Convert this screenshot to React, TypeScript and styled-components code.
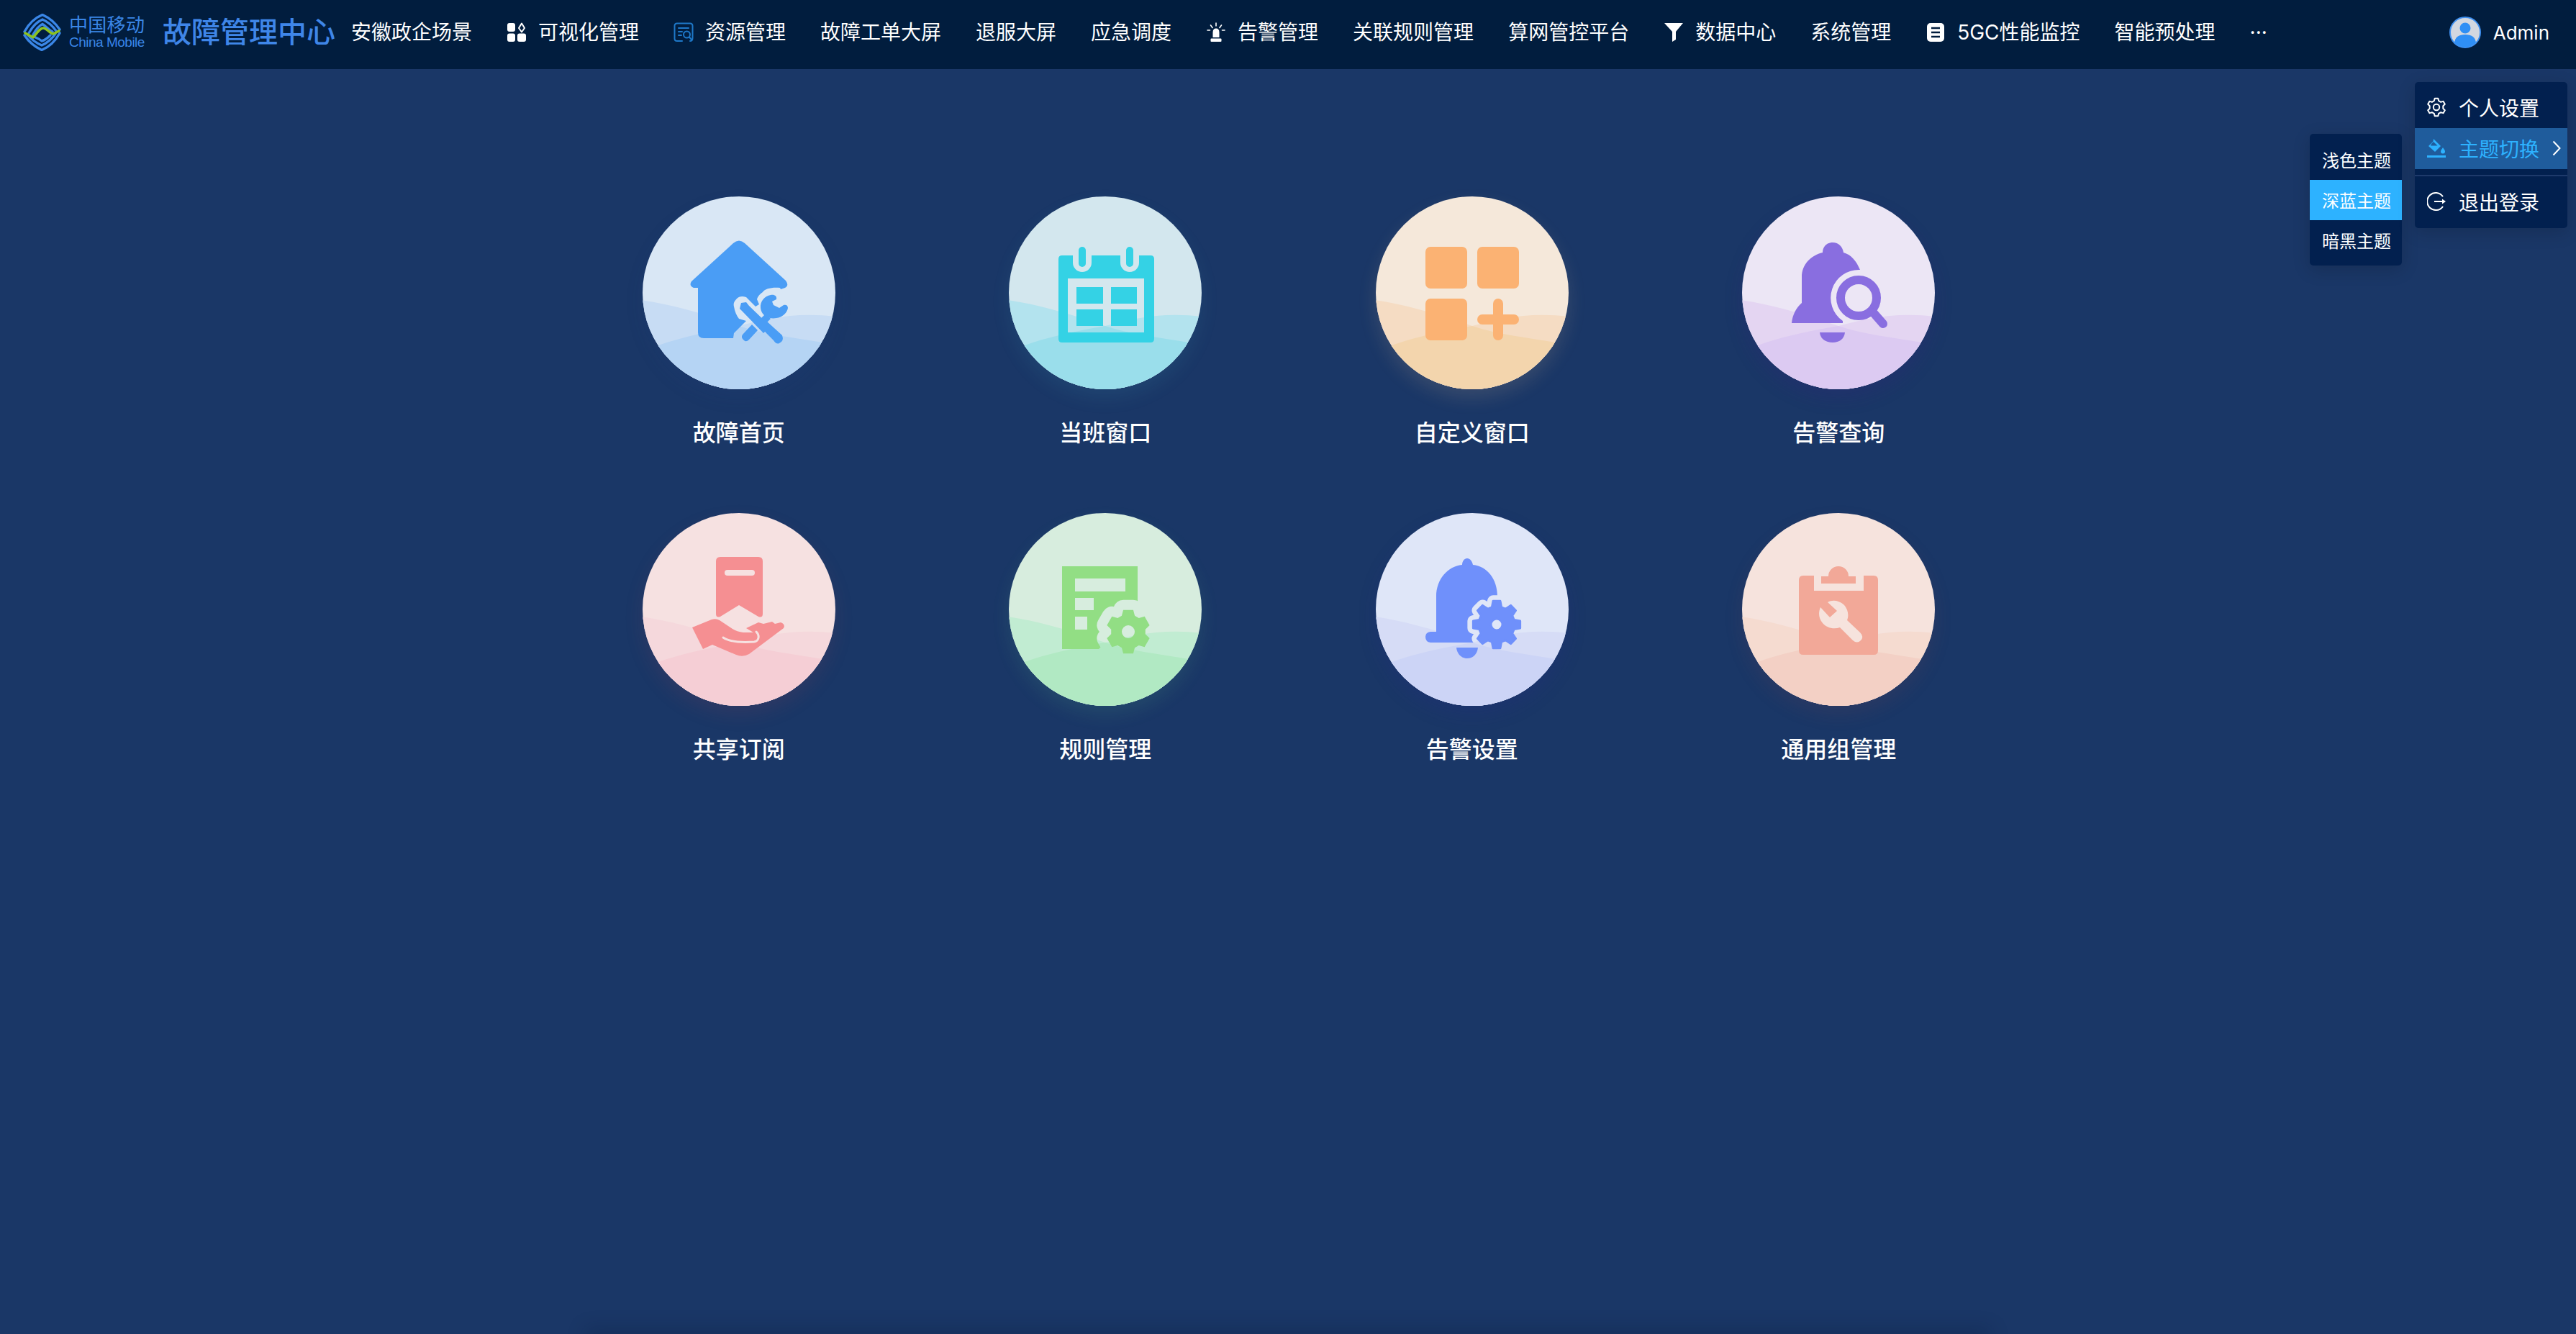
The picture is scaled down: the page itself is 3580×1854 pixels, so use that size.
import React from 'react';
import styled, { createGlobalStyle } from 'styled-components';

const FONT = `Inter, "Noto Sans CJK SC", "Noto Sans", sans-serif`;

const Global = createGlobalStyle`
  html, body { margin: 0; padding: 0; background: #1a3767; }
  body { font-family: ${FONT}; }
  * { box-sizing: border-box; }
`;

const Page = styled.div`
  position: relative;
  width: 3580px;
  height: 1854px;
  overflow: hidden;
  background: #1a3767;
`;

const Header = styled.header`
  display: flex;
  align-items: center;
  height: 96px;
  padding: 0 0 6px 32px;
  background: #011d3e;
  color: #fff;
`;

const LogoBlock = styled.div`
  display: flex;
  align-items: center;
  gap: 11px;
  width: 194px;
  flex: none;
`;

const LogoText = styled.div`
  display: flex;
  flex-direction: column;
  color: #3a86e6;
`;

const LogoCn = styled.span`
  font-size: 26px;
  line-height: 27px;
  letter-spacing: 0.3px;
  white-space: nowrap;
`;

const LogoEn = styled.span`
  font-family: "Liberation Sans", sans-serif;
  font-size: 19px;
  line-height: 22px;
  letter-spacing: -0.5px;
  white-space: nowrap;
`;

const Title = styled.h1`
  margin: 0;
  flex: none;
  width: 238px;
  font-size: 40px;
  line-height: 50px;
  font-weight: 500;
  color: #3f86e8;
  white-space: nowrap;
`;

const Nav = styled.nav`
  display: flex;
  align-items: center;
  flex: 1;
  color: #fff;
`;

const NavItem = styled.div`
  display: flex;
  align-items: center;
  gap: 16px;
  padding: 0 24px;
  font-size: 28px;
  line-height: 40px;
  white-space: nowrap;
`;

const NavIcon = styled.svg`
  width: 28px;
  height: 28px;
  flex: none;
`;

const User = styled.div`
  display: flex;
  align-items: center;
  gap: 17px;
  padding-right: 37px;
  font-size: 26px;
  flex: none;
`;

const Avatar = styled.svg`
  width: 44px;
  height: 44px;
  flex: none;
`;

const Grid = styled.main`
  display: grid;
  grid-template-columns: repeat(4, 509.5px);
  row-gap: 88px;
  justify-items: center;
  padding: 177px 0 0 772px;
`;

const Tile = styled.div`
  display: flex;
  flex-direction: column;
  align-items: center;
  gap: 38px;
`;

const Circle = styled.div<{ $glow: string; $icon: string }>`
  width: 268px;
  height: 268px;
  border-radius: 50%;
  overflow: hidden;
  color: ${p => p.$icon};
  box-shadow: 0 12px 26px ${p => p.$glow};
  svg { display: block; width: 268px; height: 268px; }
`;

const Label = styled.div`
  font-size: 32px;
  line-height: 46px;
  font-weight: 500;
  color: #fff;
  white-space: nowrap;
`;

const Menu = styled.div`
  position: absolute;
  background: #02204f;
  border-radius: 5px;
  box-shadow: 0 6px 24px rgba(0, 0, 0, 0.16);
  color: #fff;
`;

const UserMenu = styled(Menu)`
  top: 114px;
  left: 3356px;
  width: 212px;
  padding-top: 8px;
  height: 203px;
`;

const ThemeMenu = styled(Menu)`
  top: 186px;
  left: 3210px;
  width: 128px;
  height: 183px;
  padding-top: 8px;
`;

const MenuRow = styled.div<{ $active?: boolean }>`
  display: flex;
  align-items: center;
  gap: 18px;
  height: ${p => (p.$active ? 57 : 56)}px;
  padding: 0 0 2px 17px;
  font-size: 28px;
  white-space: nowrap;
  background: ${p => (p.$active ? '#1f5c9c' : 'transparent')};
  color: ${p => (p.$active ? '#2db2ff' : '#fff')};
  svg { flex: none; }
`;

const MenuIcon = styled.svg`
  width: 26px;
  height: 28px;
`;

const Arrow = styled.svg`
  width: 12px;
  height: 22px;
`;

const Divider = styled.div`
  height: 2px;
  margin: 8px 0;
  background: #1e3a6b;
`;

const ThemeRow = styled.div<{ $active?: boolean }>`
  display: flex;
  align-items: center;
  height: 56px;
  padding: 0 0 2px 17px;
  font-size: 24px;
  white-space: nowrap;
  color: #fff;
  background: ${p => (p.$active ? '#2db2ff' : 'transparent')};
`;

const BottomShade = styled.div`
  position: absolute;
  left: 820px;
  bottom: -6px;
  width: 1940px;
  height: 6px;
  box-shadow: 0 0 26px 6px rgba(2, 20, 50, 0.28);
`;

function gear(cx: number, cy: number, ro: number, ri: number, n: number, hole = 0, w = 0.27) {
  const step = (Math.PI * 2) / n;
  const pts: string[] = [];
  const pt = (r: number, a: number) => `${(cx + r * Math.cos(a)).toFixed(2)} ${(cy + r * Math.sin(a)).toFixed(2)}`;
  for (let i = 0; i < n; i++) {
    const a = i * step - Math.PI / 2;
    pts.push(pt(ri, a - step * (w + 0.1)), pt(ro, a - step * w * 0.8), pt(ro, a + step * w * 0.8), pt(ri, a + step * (w + 0.1)));
  }
  let d = `M${pts.join(' L')} Z`;
  if (hole) d += ` M${cx - hole} ${cy} a${hole} ${hole} 0 1 0 ${hole * 2} 0 a${hole} ${hole} 0 1 0 ${-hole * 2} 0 Z`;
  return d;
}

const HouseIcon = () => (
  <g fill="currentColor">
    <path d="M85 197 Q77 197 77 189 L77 127 L71 127 Q64 124 68 118 L126 65 Q134 58 142 65 L199 117 Q204 124 198 127 L192 129 L191 127 C180 126 170 128 167 133 C162 136 160 140 159 143 L162 150 L157 153 L144 140 C138 138 134 139 131 142 C127 146 126 149 127 153 C128 160 131 166 134 170 L144 173 L127 190 L126 197 Z" />
    <path d="M141 200 Q136 196 139 192 L152 178 L160 186 L148 199 Q144 203 141 200 Z" />
    <path d="M137 148 L144 147 L148 152 L178 181 L168 190 L139 160 L135 156 Z" />
    <path d="M164 191 L172 182 L194 202 Q197 210 190 213 Q186 215 182 209 Z" transform="translate(0 -9)" />
    <path d="M178 137 C170 138 163 146 164 155 C165 166 176 171 186 169 C194 168 201 162 202 155 C202 151 199 150 196 151 L190 155 L182 151 L180 146 L186 143 C187 138 183 136 178 137 Z" />
    <path d="M171 163 L178 170 L166 182 L159 175 Z" />
  </g>
);

const CalendarIcon = () => (
  <g fill="currentColor">
    <path
      fillRule="evenodd"
      d="M74 82 H89 V92 A13 13 0 0 0 115 92 V82 H155 V92 A13 13 0 0 0 181 92 V82 H197 Q202 82 202 87 V198 Q202 203 197 203 H74 Q69 203 69 198 V87 Q69 82 74 82 Z M82 114 V189 H188 V114 Z"
    />
    <rect x="97" y="70" width="10" height="28" rx="5" />
    <rect x="163" y="70" width="10" height="28" rx="5" />
    <rect x="94" y="126" width="37" height="23" />
    <rect x="142" y="126" width="36" height="23" />
    <rect x="94" y="157" width="37" height="23" />
    <rect x="142" y="157" width="36" height="23" />
  </g>
);

const AppsIcon = () => (
  <g fill="currentColor">
    <rect x="69" y="70" width="58" height="58" rx="7" />
    <rect x="141" y="70" width="58" height="58" rx="7" />
    <rect x="69" y="142" width="58" height="58" rx="7" />
    <rect x="141" y="164" width="58" height="14" rx="7" />
    <rect x="163" y="142" width="14" height="58" rx="7" />
  </g>
);

const BellSearchIcon = () => (
  <g fill="currentColor">
    <path d="M69 176 C70 165 75 155 83 148 L83 112 C83 94 96 82 112 78 C112 70 118 64 126 64 C134 64 140 70 141 78 C152 81 159 90 164 102 A39 39 0 0 0 140 173 L140 176 Z" />
    <path d="M108 189 H143 C142 198 135 203 126 203 C116 203 109 198 108 189 Z" />
    <circle cx="162" cy="141" r="25" fill="none" stroke="currentColor" strokeWidth="12" />
    <path d="M182 161 L196 177" fill="none" stroke="currentColor" strokeWidth="12" strokeLinecap="round" />
  </g>
);

const SubscribeIcon = ({ light }: { light: string }) => (
  <g fill="currentColor">
    <path d="M108 61 H161 Q167 61 167 67 V140 Q167 146 161 144 L134 128 L108 144 Q102 146 102 140 V67 Q102 61 108 61 Z" />
    <rect x="114" y="79" width="42" height="8" rx="4" fill={light} />
    <path d="M69 159 L96 148 Q102 146 107 149 L125 161 Q131 165 140 166 L154 166 L144 160 L161 152 L168 154 L180 151 L184 154 L192 152 Q199 155 196 160 L148 196 Q139 201 130 197 L97 183 L84 189 Z" />
    <path d="M112 173 C122 180 140 180 155 179 C162 178 163 170 158 165" fill="none" stroke={light} strokeWidth="3" strokeLinecap="round" />
  </g>
);

const RuleIcon = () => {
  const g = gear(166, 165, 31, 24, 6, 9);
  return (
    <g fill="currentColor">
      <mask id="ruleHalo" maskUnits="userSpaceOnUse" x="0" y="0" width="268" height="268">
        <rect width="268" height="268" fill="#fff" />
        <path d={gear(166, 165, 31, 24, 6)} fill="#000" stroke="#000" strokeWidth="28" strokeLinejoin="round" />
      </mask>
      <path
        mask="url(#ruleHalo)"
        fillRule="evenodd"
        d="M74 74 H179 V138 L125 189 H74 Z M92 91 V109 H162 V91 Z M92 118 V135 H118 V118 Z M92 144 V162 H109 V144 Z"
      />
      <path d={g} fillRule="evenodd" />
    </g>
  );
};

const BellGearIcon = () => {
  const g = gear(168, 155, 33, 25, 8, 8, 0.24);
  return (
    <g fill="currentColor">
      <mask id="bellHalo" maskUnits="userSpaceOnUse" x="0" y="0" width="268" height="268">
        <rect width="268" height="268" fill="#fff" />
        <path d={gear(168, 155, 33, 25, 8, 0, 0.24)} fill="#000" stroke="#000" strokeWidth="16" strokeLinejoin="round" />
      </mask>
      <path
        mask="url(#bellHalo)"
        d="M76 165 H84 V116 C84 92 100 74 120 72 C120 67 123 63 127 63 C131 63 134 67 135 72 C155 74 169 92 169 116 V180 H76 Q69 179 69 172 Q69 166 76 165 Z"
      />
      <path d="M112 187 H142 C141 196 135 202 127 202 C119 202 113 196 112 187 Z" />
      <path d={g} fillRule="evenodd" stroke="currentColor" strokeWidth="3" strokeLinejoin="round" />
    </g>
  );
};

const ClipboardIcon = ({ light }: { light: string }) => (
  <g fill="currentColor">
    <path d="M85 87 H100 V108 H169 V87 H183 Q189 87 189 93 V191 Q189 197 183 197 H85 Q79 197 79 191 V93 Q79 87 85 87 Z" />
    <path d="M110 88 H120 A14 14 0 0 1 148 88 H158 V98 H110 Z" />
    <path
      fill={light}
      d="M119 124 C126 120 135 122 141 127 C147 133 149 142 146 149 L164 166 Q170 172 165 177 Q160 182 154 177 L136 159 C128 162 118 160 112 153 C106 146 106 138 109 131 L122 145 L132 136 Z"
    />
  </g>
);

type TileData = { label: string; top: string; mid: string; low: string; icon: string; glow: string; art: React.ReactNode };

const tiles: TileData[] = [
  { label: '故障首页', top: '#d9e7f5', mid: '#c7dcf4', low: '#b5d4f4', icon: '#4a9df5', glow: 'rgba(40,70,140,0.1)', art: <HouseIcon /> },
  { label: '当班窗口', top: '#d3e7ee', mid: '#b3e3ee', low: '#9adeeb', icon: '#34d2e5', glow: 'rgba(80,190,210,0.1)', art: <CalendarIcon /> },
  { label: '自定义窗口', top: '#f5e8da', mid: '#f5dcc3', low: '#f3d5ad', icon: '#fbb273', glow: 'rgba(240,200,150,0.14)', art: <AppsIcon /> },
  { label: '告警查询', top: '#ece6f5', mid: '#e4d5f2', low: '#dccaf2', icon: '#896ee0', glow: 'rgba(60,30,130,0.2)', art: <BellSearchIcon /> },
  { label: '共享订阅', top: '#f6e1e1', mid: '#f5d8dc', low: '#f5ced5', icon: '#f58f92', glow: 'rgba(150,70,90,0.16)', art: <SubscribeIcon light="#f6e1e1" /> },
  { label: '规则管理', top: '#d7edde', mid: '#c1ecd2', low: '#b1e9c3', icon: '#92de84', glow: 'rgba(110,220,150,0.11)', art: <RuleIcon /> },
  { label: '告警设置', top: '#dfe6f8', mid: '#d6dcf6', low: '#ccd4f6', icon: '#6f90fb', glow: 'rgba(40,40,140,0.2)', art: <BellGearIcon /> },
  { label: '通用组管理', top: '#f6e3dd', mid: '#f5dbd0', low: '#f3d0c5', icon: '#f2a898', glow: 'rgba(140,70,80,0.14)', art: <ClipboardIcon light="#f6e3dd" /> },
];

const Waves = ({ top, mid, low }: { top: string; mid: string; low: string }) => (
  <>
    <rect width="268" height="268" fill={top} />
    <path d="M-2 144 C40 150 85 163 134 180 C170 192 210 196 250 203 L268 268 L0 268 Z" fill={mid} />
    <path d="M18 209 C55 195 95 187 134 180 C170 170 215 160 268 167 L268 268 L0 268 Z" fill={mid} />
    <path d="M22 207 C55 195 95 187 134 180 C170 192 210 196 250 203 L268 268 L0 268 Z" fill={low} />
  </>
);

const VisualIcon = () => (
  <NavIcon viewBox="0 0 28 28">
    <rect x="1" y="1" width="11" height="12" rx="3" fill="#fff" />
    <path d="M21 1.5 L25 8 L21 13.5 L17 8 Z" fill="none" stroke="#fff" strokeWidth="2" strokeLinejoin="round" />
    <rect x="1" y="15.5" width="11" height="11.5" rx="3" fill="#fff" />
    <rect x="15" y="15.5" width="12" height="11.5" rx="3" fill="#fff" />
  </NavIcon>
);

const ResourceIcon = () => (
  <NavIcon viewBox="0 0 28 28">
    <g fill="none" stroke="#1e78c8" strokeWidth="2" strokeLinecap="round">
      <path d="M12 26 H5 Q1.5 26 1.5 22.5 V5 Q1.5 1.5 5 1.5 H23 Q26.5 1.5 26.5 5 V22 Q26.5 26 23 26" />
      <path d="M7 8 H21 M7 13 H12 M7 18 H11" />
      <circle cx="18.5" cy="17" r="4.5" />
      <path d="M22 20.5 L25 24" />
    </g>
  </NavIcon>
);

const BeaconIcon = () => (
  <NavIcon viewBox="0 0 28 28">
    <g stroke="#fff" strokeWidth="1.6" strokeLinecap="round">
      <path d="M14 1 V5 M6.5 4 L9 7.5 M21.5 4 L19 7.5 M2 11 H5.5 M22.5 11 H26" />
    </g>
    <path d="M9.5 21 V14 Q9.5 8.5 14 8.5 Q18.5 8.5 18.5 14 V21 Z" fill="#fff" />
    <rect x="6.5" y="22.5" width="15" height="4.5" rx="1" fill="#fff" />
  </NavIcon>
);

const FunnelIcon = () => (
  <NavIcon viewBox="0 0 28 28">
    <path d="M1 1 H27 L17 13 V24 L12 27 V13 Z" fill="#fff" strokeLinejoin="round" />
  </NavIcon>
);

const DbIcon = () => (
  <NavIcon viewBox="0 0 28 28">
    <rect x="2" y="1" width="24" height="26" rx="5" fill="#fff" />
    <path d="M8 8 H20 M8 14 H20 M8 20 H20" stroke="#011d3e" strokeWidth="2.4" />
  </NavIcon>
);

const ChinaMobileLogo = () => (
  <svg width="53" height="52" viewBox="0 0 53 52" fill="none">
    <g stroke="#3a86e6" strokeWidth="3.4" strokeLinecap="round">
      <path d="M2 25 C8 14 16 6 27 1.5 C37 6 45 13 51 22" />
      <path d="M8 27 C13 18 20 11 27 8 C34 11 41 17 46 24" />
      <path d="M14 29 C18 22 22 17 27 14.5 C33 18 36 23 41 25" />
      <path d="M51 27 C45 38 37 46 26 50.5 C16 46 8 39 2 30" />
      <path d="M45 28 C40 35 33 41 26 44 C19 41 12 36 7 30" />
      <path d="M38 30 C35 33 30 37 26 38 C21 34 17 33 13 31" />
    </g>
    <path d="M3 27 L14 33 C20 26 24 20 28 20 C33 20 38 28 42 28 L50 24" stroke="#8cc220" strokeWidth="3.6" strokeLinecap="round" strokeLinejoin="round" />
  </svg>
);

const navItems: { text: string; icon?: React.ReactNode }[] = [
  { text: '安徽政企场景' },
  { text: '可视化管理', icon: <VisualIcon /> },
  { text: '资源管理', icon: <ResourceIcon /> },
  { text: '故障工单大屏' },
  { text: '退服大屏' },
  { text: '应急调度' },
  { text: '告警管理', icon: <BeaconIcon /> },
  { text: '关联规则管理' },
  { text: '算网管控平台' },
  { text: '数据中心', icon: <FunnelIcon /> },
  { text: '系统管理' },
  { text: '5GC性能监控', icon: <DbIcon /> },
  { text: '智能预处理' },
  { text: '···' },
];

export default function App() {
  return (
    <Page>
      <Global />
      <Header>
        <LogoBlock>
          <ChinaMobileLogo />
          <LogoText>
            <LogoCn>中国移动</LogoCn>
            <LogoEn>China Mobile</LogoEn>
          </LogoText>
        </LogoBlock>
        <Title>故障管理中心</Title>
        <Nav>
          {navItems.map(n => (
            <NavItem key={n.text}>
              {n.icon}
              <span>{n.text}</span>
            </NavItem>
          ))}
        </Nav>
        <User>
          <Avatar viewBox="0 0 44 44">
            <defs>
              <clipPath id="avatarClip">
                <circle cx="22" cy="22" r="20.5" />
              </clipPath>
            </defs>
            <circle cx="22" cy="22" r="21" fill="#d2d7e0" stroke="#3f90f0" strokeWidth="2" />
            <g clipPath="url(#avatarClip)" fill="#2f8ff5">
              <circle cx="22" cy="16" r="7.5" />
              <path d="M7 38 C7 28 14 25 22 25 C30 25 37 28 37 38 V44 H7 Z" />
            </g>
          </Avatar>
          <span>Admin</span>
        </User>
      </Header>

      <Grid>
        {tiles.map(t => (
          <Tile key={t.label}>
            <Circle $glow={t.glow} $icon={t.icon}>
              <svg viewBox="0 0 268 268">
                <Waves top={t.top} mid={t.mid} low={t.low} />
                {t.art}
              </svg>
            </Circle>
            <Label>{t.label}</Label>
          </Tile>
        ))}
      </Grid>

      <ThemeMenu>
        <ThemeRow>浅色主题</ThemeRow>
        <ThemeRow $active>深蓝主题</ThemeRow>
        <ThemeRow>暗黑主题</ThemeRow>
      </ThemeMenu>

      <UserMenu>
        <MenuRow>
          <MenuIcon viewBox="0 0 26 28">
            <path
              d={gear(13, 14, 12.5, 9.5, 6, 0, 0.22)}
              fill="none"
              stroke="#fff"
              strokeWidth="2"
              strokeLinejoin="round"
            />
            <circle cx="13" cy="14" r="4.2" fill="none" stroke="#fff" strokeWidth="2" />
          </MenuIcon>
          个人设置
        </MenuRow>
        <MenuRow $active>
          <MenuIcon viewBox="0 0 26 28">
            <g fill="#2db2ff">
              <path d="M9 1 L11 3 L19 11 L11 19 L2 11 L8.5 4.5 Z" />
              <path d="M22 13 C24 16 25 17 25 18.5 A3 3 0 0 1 19 18.5 C19 17 20 16 22 13 Z" />
              <rect x="0" y="24" width="26" height="3" />
            </g>
            <path d="M6 8 L9 5 L14.5 10.5 L5 10.5 Z" fill="#1f5c9c" />
          </MenuIcon>
          主题切换
          <Arrow viewBox="0 0 12 22">
            <path d="M1.5 1.5 L10.5 11 L1.5 20.5" fill="none" stroke="#fff" strokeWidth="2" />
          </Arrow>
        </MenuRow>
        <Divider />
        <MenuRow>
          <MenuIcon viewBox="0 0 26 28">
            <path d="M21.5 6.5 A12 12 0 1 0 21.5 21.5" fill="none" stroke="#fff" strokeWidth="2" strokeLinecap="round" />
            <path d="M10 14 H24" stroke="#fff" strokeWidth="2" />
            <path d="M21 10.5 L26 14 L21 17.5 Z" fill="#fff" />
          </MenuIcon>
          退出登录
        </MenuRow>
      </UserMenu>

      <BottomShade />
    </Page>
  );
}
